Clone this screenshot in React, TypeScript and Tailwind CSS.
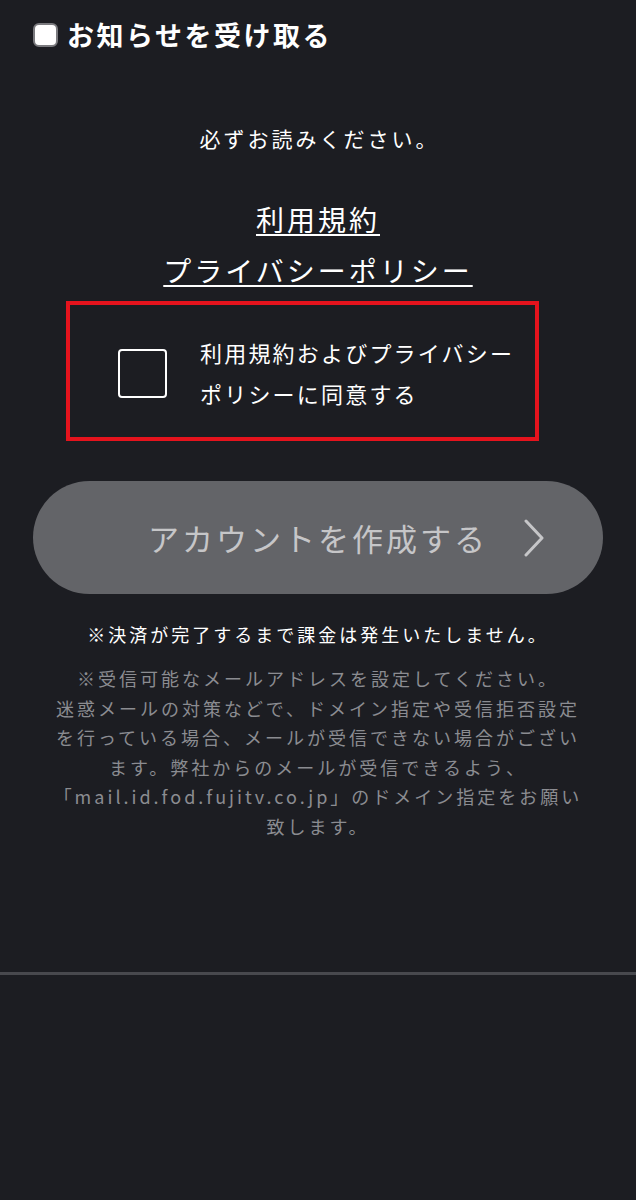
import React from 'react';

const font = "font-['Noto_Sans_CJK_JP','Noto_Sans',sans-serif]";

export default function App() {
  return (
    <div className={`min-h-[1200px] w-full bg-[#1c1d22] text-white ${font}`}>
      {/* notification opt-in */}
      <div className="flex items-center pl-[33px] pt-[23px] gap-[9px]">
        <span className="block w-[25px] h-[24px] rounded-[6px] bg-white border-[2px] border-[#7a7a7e]" />
        <span className="text-[27px] leading-[24px] font-bold tracking-[2.5px]">お知らせを受け取る</span>
      </div>

      <p className="mt-[77px] text-center text-[21px] leading-[28px] tracking-[3px] pl-[3px]">必ずお読みください。</p>

      <div className="mt-[47px] flex flex-col items-center">
        <a className="text-[28px] leading-[40px] tracking-[3px] underline decoration-[2px] underline-offset-[3px]">利用規約</a>
        <a className="mt-[11px] text-[28px] leading-[40px] tracking-[3px] underline decoration-[2px] underline-offset-[3px]">プライバシーポリシー</a>
      </div>

      {/* agreement box */}
      <div className="ml-[66px] mt-[11px] w-[473px] h-[140px] border-[4px] border-[#e5131d] flex items-center pl-[48px] pt-[4px]">
        <span className="block w-[49px] h-[49px] rounded-[4px] border-[2px] border-white shrink-0" />
        <p className="ml-[33px] text-[22px] leading-[41px] tracking-[2.2px]">
          利用規約およびプライバシー
          <br />
          ポリシーに同意する
        </p>
      </div>

      {/* submit */}
      <div className="mt-[40px] mx-[33px] relative h-[113px] rounded-full bg-[#636468] flex items-center justify-center">
        <span className="text-[31px] leading-[40px] tracking-[3px] text-[#c6c6c8]">アカウントを作成する</span>
        <svg className="absolute right-[57px] top-[38px]" width="24" height="38" viewBox="0 0 24 38" fill="none">
          <path d="M4 2 L20 19 L4 36" stroke="#c6c6c8" strokeWidth="3" strokeLinecap="round" strokeLinejoin="round" />
        </svg>
      </div>

      <p className="mt-[27px] text-center text-[18px] leading-[26px] tracking-[3px]">※決済が完了するまで課金は発生いたしません。</p>

      <p className="mt-[17px] px-[20px] text-center text-[18px] leading-[29.5px] tracking-[3px] text-[#8b8c91]">
        ※受信可能なメールアドレスを設定してください。
        <br />
        迷惑メールの対策などで、ドメイン指定や受信拒否設定
        <br />
        を行っている場合、メールが受信できない場合がござい
        <br />
        ます。弊社からのメールが受信できるよう、
        <br />
        「mail.id.fod.fujitv.co.jp」のドメイン指定をお願い
        <br />
        致します。
      </p>

      <div className="mt-[131px] h-[3px] w-full bg-[#48494e]" />
    </div>
  );
}
